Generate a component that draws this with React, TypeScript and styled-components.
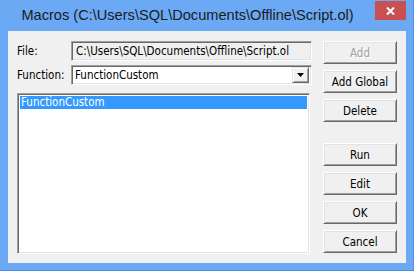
import styled, { createGlobalStyle } from "styled-components";

const Global = createGlobalStyle`
  html, body {
    margin: 0;
    padding: 0;
    background: #6ba9f5;
  }
`;

const uiFont = `"DejaVu Sans Condensed", "Liberation Sans", sans-serif`;

const Window = styled.div`
  width: 414px;
  height: 271px;
  box-sizing: border-box;
  background: #6ba9f5;
  border-right: 1px solid #4f8ee0;
  border-bottom: 1px solid #4f8ee0;
  display: flex;
  flex-direction: column;
  padding: 0 7px 7px 8px;
`;

const TitleBar = styled.div`
  height: 31px;
  display: flex;
  align-items: flex-start;
`;

const Title = styled.div`
  flex: 1;
  height: 31px;
  line-height: 31px;
  text-align: center;
  font-family: "Liberation Sans", sans-serif;
  font-size: 14.6px;
  color: #1b1b1b;
  white-space: nowrap;
  margin-left: -8px;
`;

const CloseButton = styled.div`
  width: 31px;
  height: 19px;
  margin-top: 1px;
  background: #c75050;
  display: flex;
  align-items: center;
  justify-content: center;
`;

const Client = styled.div`
  flex: 1;
  background: #f0f0f0;
  display: flex;
  gap: 11px;
  padding: 10px 9px 9px 9px;
  font-family: ${uiFont};
  font-size: 11.5px;
  color: #000;
`;

const LeftColumn = styled.div`
  width: 295px;
  display: flex;
  flex-direction: column;
`;

const FieldRow = styled.div<{ $gap?: number }>`
  display: flex;
  align-items: center;
  height: 20px;
  margin-bottom: ${(p) => p.$gap ?? 0}px;
`;

const Label = styled.div`
  width: 54px;
`;

const Sunken = styled.div<{ $bg?: string }>`
  box-sizing: border-box;
  border: 1px solid;
  border-color: #a0a0a0 #ffffff #ffffff #a0a0a0;
  box-shadow: inset 1px 1px #696969, inset -1px -1px #e3e3e3;
  background: ${(p) => p.$bg ?? "#fff"};
`;

const TextBox = styled(Sunken)`
  width: 241px;
  height: 20px;
  padding: 0 4px;
  display: flex;
  align-items: center;
  white-space: nowrap;
  overflow: hidden;
`;

const Combo = styled(Sunken)`
  width: 241px;
  height: 20px;
  padding: 2px 2px 2px 3px;
  display: flex;
  align-items: center;
  justify-content: space-between;
`;

const DropButton = styled.div`
  width: 17px;
  height: 16px;
  box-sizing: border-box;
  background: #f0f0f0;
  border: 1px solid;
  border-color: #e3e3e3 #696969 #696969 #e3e3e3;
  box-shadow: inset 1px 1px #fff, inset -1px -1px #a0a0a0;
  display: flex;
  align-items: center;
  justify-content: center;
`;

const ListBox = styled(Sunken)`
  height: 161px;
  width: 293px;
  padding: 2px;
`;

const ListItem = styled.div<{ $selected?: boolean }>`
  height: 13px;
  line-height: 13px;
  padding-left: 1px;
  background: ${(p) => (p.$selected ? "#3399ff" : "transparent")};
  color: ${(p) => (p.$selected ? "#fff" : "#000")};
`;

const RightColumn = styled.div`
  display: flex;
  flex-direction: column;
  gap: 6px;
`;

const Button = styled.div<{ $disabled?: boolean; $space?: number }>`
  width: 74px;
  height: 23px;
  box-sizing: border-box;
  background: #f0f0f0;
  border: 1px solid;
  border-color: #ffffff #696969 #696969 #ffffff;
  box-shadow: inset 1px 1px #e3e3e3, inset -1px -1px #a0a0a0;
  display: flex;
  align-items: center;
  justify-content: center;
  margin-top: ${(p) => p.$space ?? 0}px;
  color: ${(p) => (p.$disabled ? "#a0a0a0" : "#000")};
  text-shadow: ${(p) => (p.$disabled ? "1px 1px #fff" : "none")};
`;

export default function App() {
  return (
    <>
      <Global />
      <Window>
        <TitleBar>
          <Title>Macros (C:\Users\SQL\Documents\Offline\Script.ol)</Title>
          <CloseButton>
            <svg width="9" height="8" viewBox="0 0 9 8">
              <path d="M1 0.5 L8 7.5 M8 0.5 L1 7.5" stroke="#fff" strokeWidth="2" />
            </svg>
          </CloseButton>
        </TitleBar>
        <Client>
          <LeftColumn>
            <FieldRow $gap={4}>
              <Label>File:</Label>
              <TextBox $bg="#f0f0f0">C:\Users\SQL\Documents\Offline\Script.ol</TextBox>
            </FieldRow>
            <FieldRow $gap={8}>
              <Label>Function:</Label>
              <Combo>
                <span>FunctionCustom</span>
                <DropButton>
                  <svg width="7" height="4" viewBox="0 0 7 4">
                    <path d="M0 0 H7 L3.5 4 Z" fill="#000" />
                  </svg>
                </DropButton>
              </Combo>
            </FieldRow>
            <ListBox>
              <ListItem $selected>FunctionCustom</ListItem>
            </ListBox>
          </LeftColumn>
          <RightColumn>
            <Button $disabled>Add</Button>
            <Button>Add Global</Button>
            <Button>Delete</Button>
            <Button $space={15}>Run</Button>
            <Button>Edit</Button>
            <Button>OK</Button>
            <Button>Cancel</Button>
          </RightColumn>
        </Client>
      </Window>
    </>
  );
}
